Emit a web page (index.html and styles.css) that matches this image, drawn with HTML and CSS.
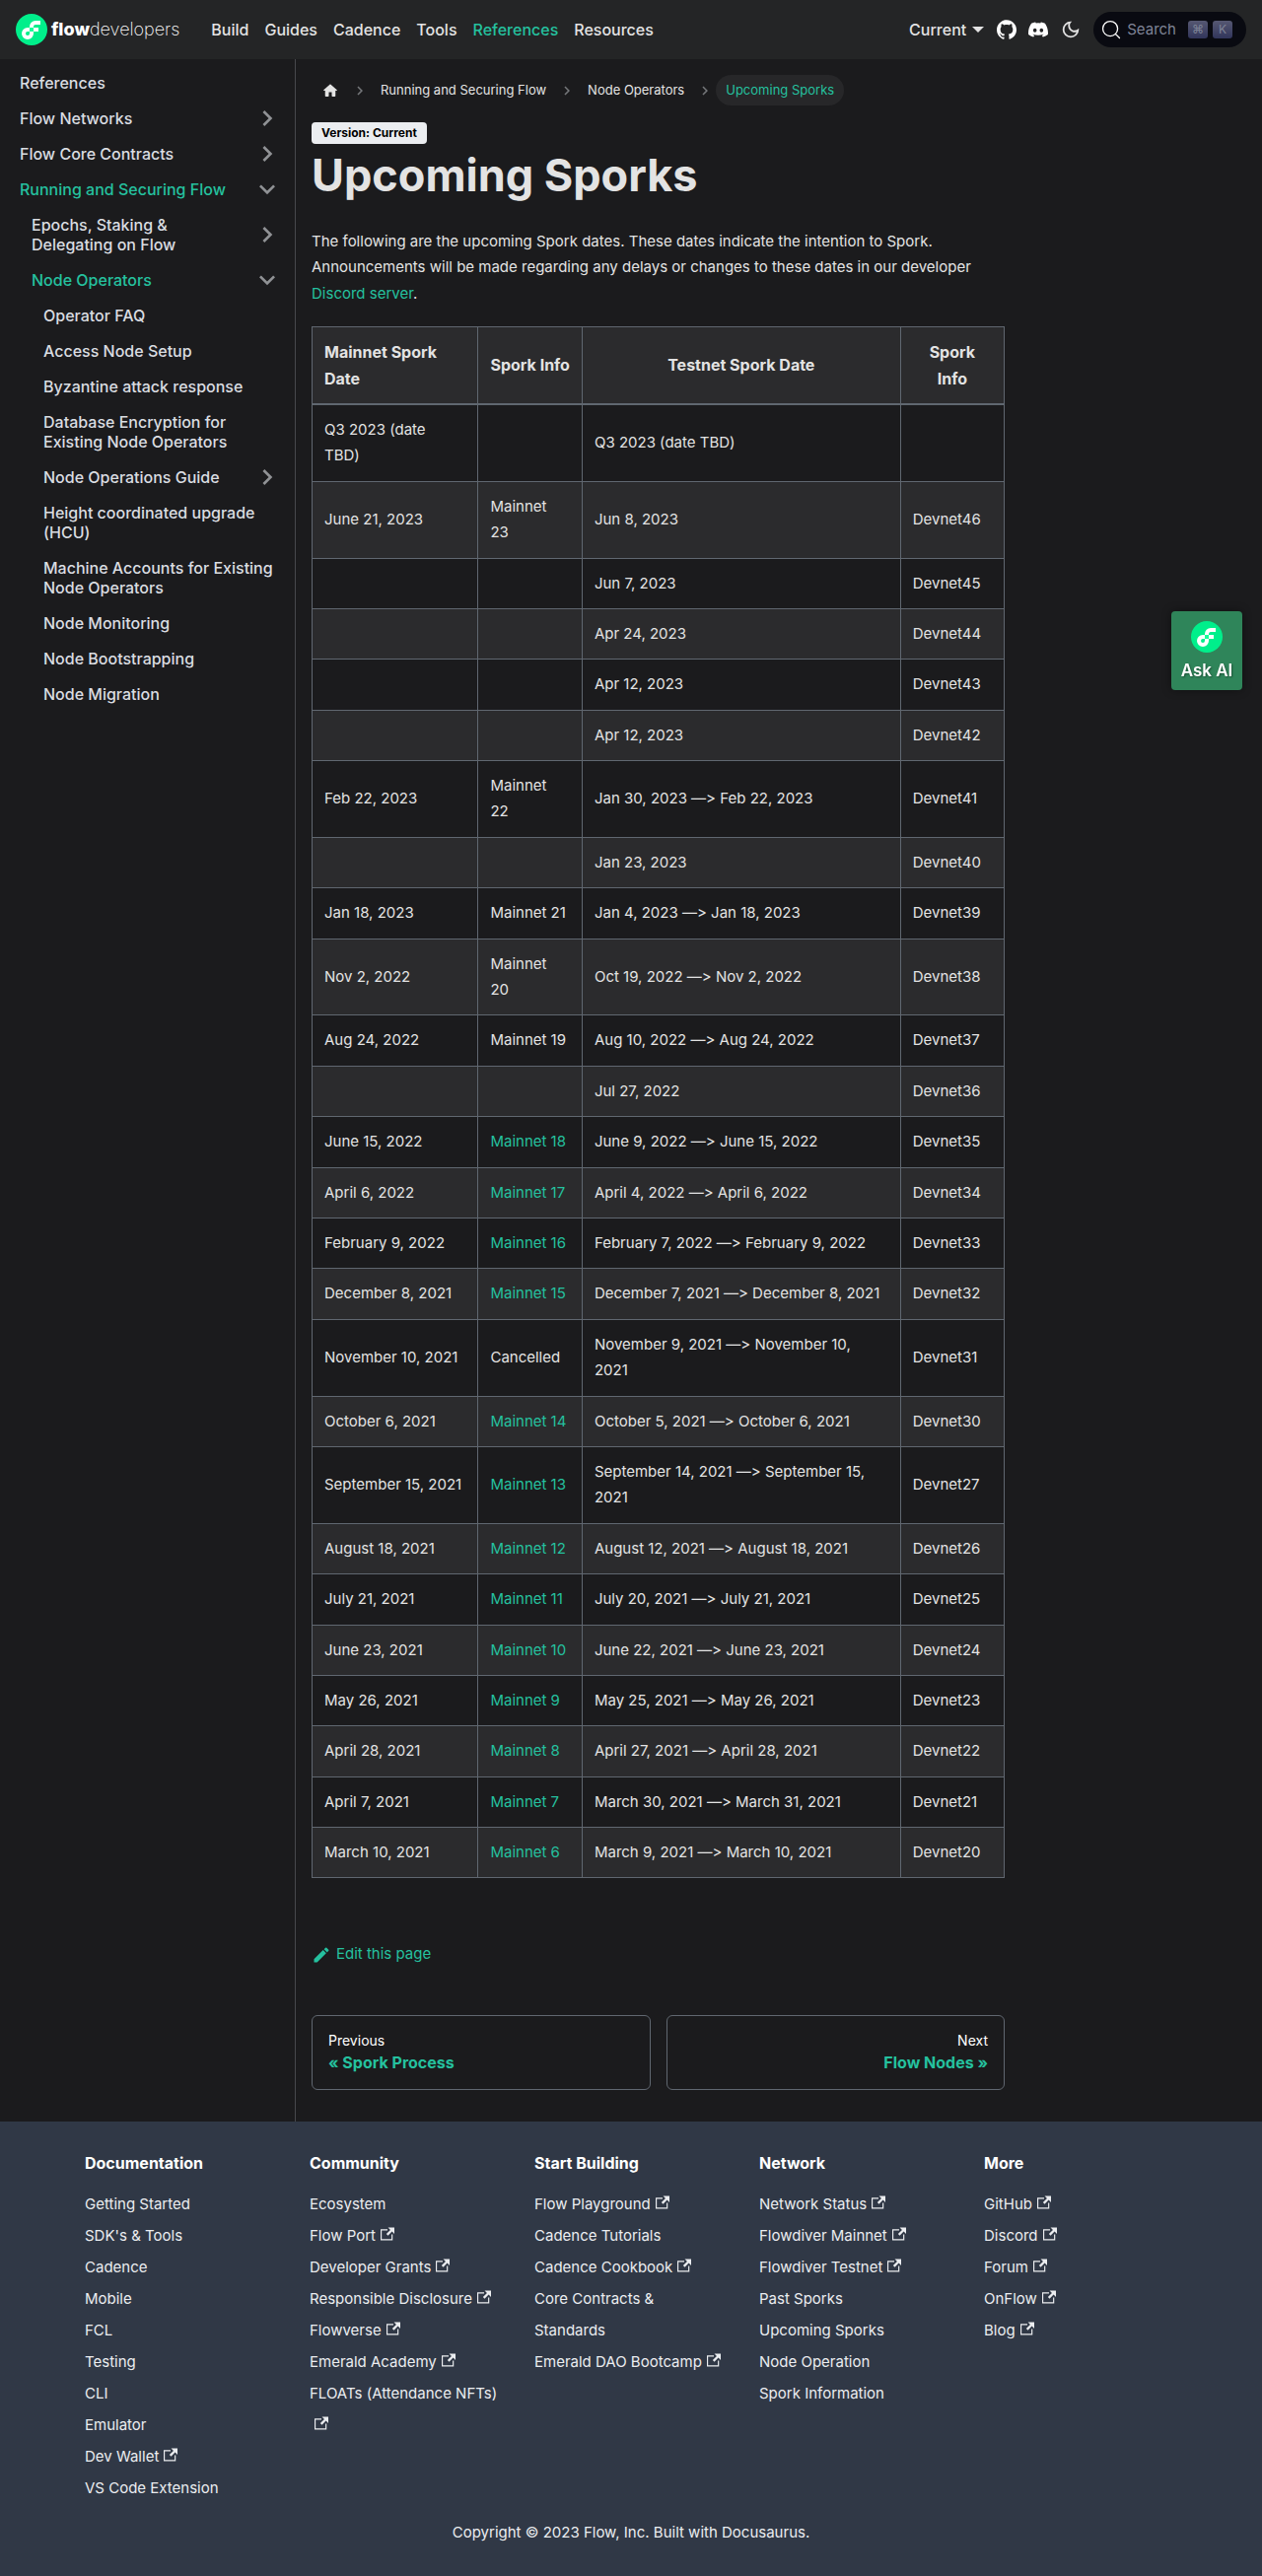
FILE: index.html
```html
<!DOCTYPE html>
<html lang="en">
<head>
<meta charset="utf-8">
<title>Upcoming Sporks | Flow Developers</title>
<link rel="stylesheet" href="styles.css">
</head>
<body>
<svg class="sprite" aria-hidden="true">
  <symbol id="flow-mark" viewBox="0 0 32 32">
    <circle cx="16" cy="16" r="16" fill="#00ef8b"/>
    <path fill="#fff" fill-rule="evenodd" d="M18 14h5v4h-5v2a6 6 0 1 1-6-6h2v-1a6 6 0 0 1 6-6h5v4h-5a2 2 0 0 0-2 2zM14 18h-2a2 2 0 1 0 2 2z"/>
    <path fill="#16ff99" d="M14 14h4v4h-4z"/>
  </symbol>
  <symbol id="external" viewBox="0 0 24 24">
    <path fill="currentColor" d="M21 13v10h-21v-19h12v2h-10v15h17v-8h2zm3-12h-10.988l4.035 4-6.977 7.07 2.828 2.828 6.977-7.07 4.125 4.172v-11z"/>
  </symbol>
  <symbol id="chevron" viewBox="0 0 24 24">
    <path fill="currentColor" d="M7.41 15.41 12 10.83l4.59 4.58L18 14l-6-6-6 6z"/>
  </symbol>
</svg>

<header class="navbar">
  <a class="brand" href="#"><svg class="brand-mark"><use href="#flow-mark"/></svg><span class="brand-name"><b>flow</b>developers</span></a>
  <nav class="nav-links" aria-label="Main">
    <a href="#">Build</a><a href="#">Guides</a><a href="#">Cadence</a><a href="#">Tools</a><a class="active" href="#">References</a><a href="#">Resources</a>
  </nav>
  <div class="nav-tools">
    <button class="version-menu" type="button">Current<span class="caret"></span></button>
    <a class="icon-link" href="#" aria-label="GitHub"><svg viewBox="0 0 24 24"><path fill="#fff" d="M12 .297c-6.63 0-12 5.373-12 12 0 5.303 3.438 9.8 8.205 11.385.6.113.82-.258.82-.577 0-.285-.01-1.04-.015-2.04-3.338.724-4.042-1.61-4.042-1.61C4.422 18.07 3.633 17.7 3.633 17.7c-1.087-.744.084-.729.084-.729 1.205.084 1.838 1.236 1.838 1.236 1.07 1.835 2.809 1.305 3.495.998.108-.776.417-1.305.76-1.605-2.665-.3-5.466-1.332-5.466-5.93 0-1.31.465-2.38 1.235-3.22-.135-.303-.54-1.523.105-3.176 0 0 1.005-.322 3.3 1.23.96-.267 1.98-.399 3-.405 1.02.006 2.04.138 3 .405 2.28-1.552 3.285-1.23 3.285-1.23.645 1.653.24 2.873.12 3.176.765.84 1.23 1.91 1.23 3.22 0 4.61-2.805 5.625-5.475 5.92.42.36.81 1.096.81 2.22 0 1.606-.015 2.896-.015 3.286 0 .315.21.69.825.57C20.565 22.092 24 17.592 24 12.297c0-6.627-5.373-12-12-12"/></svg></a>
    <a class="icon-link" href="#" aria-label="Discord"><svg viewBox="0 0 24 24"><path fill="#fff" d="M20.317 4.37a19.79 19.79 0 0 0-4.885-1.515.074.074 0 0 0-.079.037c-.21.375-.444.864-.608 1.25a18.27 18.27 0 0 0-5.487 0 12.64 12.64 0 0 0-.617-1.25.077.077 0 0 0-.079-.037A19.736 19.736 0 0 0 3.677 4.37a.07.07 0 0 0-.032.027C.533 9.046-.32 13.58.099 18.057a.082.082 0 0 0 .031.057 19.9 19.9 0 0 0 5.993 3.03.078.078 0 0 0 .084-.028 14.09 14.09 0 0 0 1.226-1.994.076.076 0 0 0-.041-.106 13.107 13.107 0 0 1-1.872-.892.077.077 0 0 1-.008-.128 10.2 10.2 0 0 0 .372-.292.074.074 0 0 1 .077-.01c3.928 1.793 8.18 1.793 12.062 0a.074.074 0 0 1 .078.01c.12.098.246.198.373.292a.077.077 0 0 1-.006.127 12.299 12.299 0 0 1-1.873.892.077.077 0 0 0-.041.107c.36.698.772 1.362 1.225 1.993a.076.076 0 0 0 .084.028 19.839 19.839 0 0 0 6.002-3.03.077.077 0 0 0 .032-.054c.5-5.177-.838-9.674-3.549-13.66a.061.061 0 0 0-.031-.03zM8.02 15.33c-1.183 0-2.157-1.085-2.157-2.419 0-1.333.956-2.419 2.157-2.419 1.21 0 2.176 1.096 2.157 2.42 0 1.333-.956 2.418-2.157 2.418zm7.975 0c-1.183 0-2.157-1.085-2.157-2.419 0-1.333.955-2.419 2.157-2.419 1.21 0 2.176 1.096 2.157 2.42 0 1.333-.946 2.418-2.157 2.418z"/></svg></a>
    <button class="theme-toggle" type="button" aria-label="Switch between dark and light mode"><svg viewBox="0 0 24 24"><path fill="currentColor" d="M9.37 5.51c-.18.64-.27 1.31-.27 1.99 0 4.08 3.32 7.4 7.4 7.4.68 0 1.35-.09 1.99-.27C17.45 17.19 14.93 19 12 19c-3.86 0-7-3.14-7-7 0-2.93 1.81-5.45 4.37-6.49zM12 3a9 9 0 1 0 9 9c0-.46-.04-.92-.1-1.36a5.389 5.389 0 0 1-4.4 2.26 5.403 5.403 0 0 1-3.14-9.8c-.44-.06-.9-.1-1.36-.1z"/></svg></button>
    <button class="search" type="button"><svg viewBox="0 0 20 20"><path d="M14.386 14.386l4.088 4.088-4.088-4.088a7.533 7.533 0 1 1 0-10.653 7.533 7.533 0 0 1 0 10.653z" stroke="currentColor" stroke-width="1.3" fill="none" stroke-linecap="round" stroke-linejoin="round"/></svg><span class="search-label">Search</span><kbd>⌘</kbd><kbd>K</kbd></button>
  </div>
</header>

<div class="layout">
  <nav class="sidebar" aria-label="Docs sidebar">
    <ul>
      <li><a href="#">References</a></li>
      <li><a href="#">Flow Networks<svg class="right"><use href="#chevron"/></svg></a></li>
      <li><a href="#">Flow Core Contracts<svg class="right"><use href="#chevron"/></svg></a></li>
      <li><a class="active" href="#">Running and Securing Flow<svg class="down"><use href="#chevron"/></svg></a>
        <ul>
          <li><a href="#">Epochs, Staking &amp; Delegating on Flow<svg class="right"><use href="#chevron"/></svg></a></li>
          <li><a class="active" href="#">Node Operators<svg class="down"><use href="#chevron"/></svg></a>
            <ul>
              <li><a href="#">Operator FAQ</a></li>
              <li><a href="#">Access Node Setup</a></li>
              <li><a href="#">Byzantine attack response</a></li>
              <li><a href="#">Database Encryption for Existing Node Operators</a></li>
              <li><a href="#">Node Operations Guide<svg class="right"><use href="#chevron"/></svg></a></li>
              <li><a href="#">Height coordinated upgrade (HCU)</a></li>
              <li><a href="#">Machine Accounts for Existing Node Operators</a></li>
              <li><a href="#">Node Monitoring</a></li>
              <li><a href="#">Node Bootstrapping</a></li>
              <li><a href="#">Node Migration</a></li>
            </ul>
          </li>
        </ul>
      </li>
    </ul>
  </nav>

  <main class="content">
    <div class="doc">
      <nav class="breadcrumbs" aria-label="Breadcrumbs">
        <a class="crumb home" href="#" aria-label="Home page"><svg viewBox="0 0 24 24"><path fill="currentColor" d="M10 19v-5h4v5c0 .55.45 1 1 1h3c.55 0 1-.45 1-1v-7h1.7c.46 0 .68-.57.33-.87L12.67 3.6c-.38-.34-.96-.34-1.34 0l-8.36 7.53c-.34.3-.13.87.33.87H5v7c0 .55.45 1 1 1h3c.55 0 1-.45 1-1z"/></svg></a>
        <svg class="sep"><use href="#chevron"/></svg>
        <a class="crumb" href="#">Running and Securing Flow</a>
        <svg class="sep"><use href="#chevron"/></svg>
        <a class="crumb" href="#">Node Operators</a>
        <svg class="sep"><use href="#chevron"/></svg>
        <span class="crumb current">Upcoming Sporks</span>
      </nav>
      <span class="badge">Version: Current</span>
      <h1>Upcoming Sporks</h1>
      <p>The following are the upcoming Spork dates. These dates indicate the intention to Spork. Announcements will be made regarding any delays or changes to these dates in our developer <a href="#">Discord server</a>.</p>
      <table>
        <colgroup><col class="col-date"><col class="col-info"><col class="col-range"><col class="col-info"></colgroup>
        <thead><tr><th class="start">Mainnet Spork Date</th><th class="start nowrap">Spork Info</th><th>Testnet Spork Date</th><th>Spork<br>Info</th></tr></thead>
        <tbody>
          <tr><td>Q3 2023 (date<br>TBD)</td><td></td><td>Q3 2023 (date TBD)</td><td></td></tr>
          <tr><td>June 21, 2023</td><td>Mainnet<br>23</td><td>Jun 8, 2023</td><td>Devnet46</td></tr>
          <tr><td></td><td></td><td>Jun 7, 2023</td><td>Devnet45</td></tr>
          <tr><td></td><td></td><td>Apr 24, 2023</td><td>Devnet44</td></tr>
          <tr><td></td><td></td><td>Apr 12, 2023</td><td>Devnet43</td></tr>
          <tr><td></td><td></td><td>Apr 12, 2023</td><td>Devnet42</td></tr>
          <tr><td>Feb 22, 2023</td><td>Mainnet<br>22</td><td>Jan 30, 2023 —&gt; Feb 22, 2023</td><td>Devnet41</td></tr>
          <tr><td></td><td></td><td>Jan 23, 2023</td><td>Devnet40</td></tr>
          <tr><td>Jan 18, 2023</td><td>Mainnet 21</td><td>Jan 4, 2023 —&gt; Jan 18, 2023</td><td>Devnet39</td></tr>
          <tr><td>Nov 2, 2022</td><td>Mainnet<br>20</td><td>Oct 19, 2022 —&gt; Nov 2, 2022</td><td>Devnet38</td></tr>
          <tr><td>Aug 24, 2022</td><td>Mainnet 19</td><td>Aug 10, 2022 —&gt; Aug 24, 2022</td><td>Devnet37</td></tr>
          <tr><td></td><td></td><td>Jul 27, 2022</td><td>Devnet36</td></tr>
          <tr><td>June 15, 2022</td><td><a href="#">Mainnet 18</a></td><td>June 9, 2022 —&gt; June 15, 2022</td><td>Devnet35</td></tr>
          <tr><td>April 6, 2022</td><td><a href="#">Mainnet 17</a></td><td>April 4, 2022 —&gt; April 6, 2022</td><td>Devnet34</td></tr>
          <tr><td>February 9, 2022</td><td><a href="#">Mainnet 16</a></td><td>February 7, 2022 —&gt; February 9, 2022</td><td>Devnet33</td></tr>
          <tr><td>December 8, 2021</td><td><a href="#">Mainnet 15</a></td><td>December 7, 2021 —&gt; December 8, 2021</td><td>Devnet32</td></tr>
          <tr><td>November 10, 2021</td><td>Cancelled</td><td>November 9, 2021 —&gt; November 10,<br>2021</td><td>Devnet31</td></tr>
          <tr><td>October 6, 2021</td><td><a href="#">Mainnet 14</a></td><td>October 5, 2021 —&gt; October 6, 2021</td><td>Devnet30</td></tr>
          <tr><td>September 15, 2021</td><td><a href="#">Mainnet 13</a></td><td>September 14, 2021 —&gt; September 15,<br>2021</td><td>Devnet27</td></tr>
          <tr><td>August 18, 2021</td><td><a href="#">Mainnet 12</a></td><td>August 12, 2021 —&gt; August 18, 2021</td><td>Devnet26</td></tr>
          <tr><td>July 21, 2021</td><td><a href="#">Mainnet 11</a></td><td>July 20, 2021 —&gt; July 21, 2021</td><td>Devnet25</td></tr>
          <tr><td>June 23, 2021</td><td><a href="#">Mainnet 10</a></td><td>June 22, 2021 —&gt; June 23, 2021</td><td>Devnet24</td></tr>
          <tr><td>May 26, 2021</td><td><a href="#">Mainnet 9</a></td><td>May 25, 2021 —&gt; May 26, 2021</td><td>Devnet23</td></tr>
          <tr><td>April 28, 2021</td><td><a href="#">Mainnet 8</a></td><td>April 27, 2021 —&gt; April 28, 2021</td><td>Devnet22</td></tr>
          <tr><td>April 7, 2021</td><td><a href="#">Mainnet 7</a></td><td>March 30, 2021 —&gt; March 31, 2021</td><td>Devnet21</td></tr>
          <tr><td>March 10, 2021</td><td><a href="#">Mainnet 6</a></td><td>March 9, 2021 —&gt; March 10, 2021</td><td>Devnet20</td></tr>
        </tbody>
      </table>
      <a class="edit" href="#"><svg viewBox="0 0 40 40"><path fill="currentColor" d="m34.5 11.7-3 3.1-6.3-6.3 3.1-3q.5-.5 1.2-.5t1.1.5l3.9 3.9q.5.4.5 1.1t-.5 1.2zM5 28.600l18.400-18.400 6.300 6.300-18.400 18.500h-6.300z"/></svg>Edit this page</a>
      <nav class="pager" aria-label="Docs pages">
        <a href="#"><span>Previous</span><strong>« Spork Process</strong></a>
        <a class="next" href="#"><span>Next</span><strong>Flow Nodes »</strong></a>
      </nav>
    </div>
  </main>
</div>

<button class="ask-ai" type="button"><svg><use href="#flow-mark"/></svg>Ask AI</button>

<footer class="footer">
  <div class="footer-cols">
    <section><h2>Documentation</h2><ul>
      <li><a href="#">Getting Started</a></li><li><a href="#">SDK's &amp; Tools</a></li><li><a href="#">Cadence</a></li><li><a href="#">Mobile</a></li><li><a href="#">FCL</a></li><li><a href="#">Testing</a></li><li><a href="#">CLI</a></li><li><a href="#">Emulator</a></li><li><a href="#">Dev Wallet<svg><use href="#external"/></svg></a></li><li><a href="#">VS Code Extension</a></li></ul></section>
    <section><h2>Community</h2><ul>
      <li><a href="#">Ecosystem</a></li><li><a href="#">Flow Port<svg><use href="#external"/></svg></a></li><li><a href="#">Developer Grants<svg><use href="#external"/></svg></a></li><li><a href="#">Responsible Disclosure<svg><use href="#external"/></svg></a></li><li><a href="#">Flowverse<svg><use href="#external"/></svg></a></li><li><a href="#">Emerald Academy<svg><use href="#external"/></svg></a></li><li><a href="#">FLOATs (Attendance NFTs)<svg><use href="#external"/></svg></a></li></ul></section>
    <section><h2>Start Building</h2><ul>
      <li><a href="#">Flow Playground<svg><use href="#external"/></svg></a></li><li><a href="#">Cadence Tutorials</a></li><li><a href="#">Cadence Cookbook<svg><use href="#external"/></svg></a></li><li><a href="#">Core Contracts &amp;<br>Standards</a></li><li><a href="#">Emerald DAO Bootcamp<svg><use href="#external"/></svg></a></li></ul></section>
    <section><h2>Network</h2><ul>
      <li><a href="#">Network Status<svg><use href="#external"/></svg></a></li><li><a href="#">Flowdiver Mainnet<svg><use href="#external"/></svg></a></li><li><a href="#">Flowdiver Testnet<svg><use href="#external"/></svg></a></li><li><a href="#">Past Sporks</a></li><li><a href="#">Upcoming Sporks</a></li><li><a href="#">Node Operation</a></li><li><a href="#">Spork Information</a></li></ul></section>
    <section><h2>More</h2><ul>
      <li><a href="#">GitHub<svg><use href="#external"/></svg></a></li><li><a href="#">Discord<svg><use href="#external"/></svg></a></li><li><a href="#">Forum<svg><use href="#external"/></svg></a></li><li><a href="#">OnFlow<svg><use href="#external"/></svg></a></li><li><a href="#">Blog<svg><use href="#external"/></svg></a></li></ul></section>
  </div>
  <p class="copyright">Copyright © 2023 Flow, Inc. Built with Docusaurus.</p>
</footer>
</body>
</html>
```
FILE: styles.css
```css
:root {
  --green: #25c19f;
  --text: #e3e3e3;
  --bg: #1b1b1d;
  --line: #606770;
}

* { box-sizing: border-box; }

body {
  margin: 0;
  background: var(--bg);
  color: var(--text);
  font-family: Inter, "Liberation Sans", sans-serif;
  font-size: 15px;
  line-height: 1.76;
  font-variant-ligatures: no-contextual;
}

a { color: var(--green); text-decoration: none; }
ul { margin: 0; padding: 0; list-style: none; }
button { font: inherit; color: inherit; border: 0; background: none; padding: 0; }
.sprite { display: none; }

/* Top bar */
.navbar {
  display: flex;
  align-items: center;
  height: 60px;
  padding: 0 16px;
  background: #242526;
}
.brand { display: flex; align-items: center; gap: 4px; margin-right: 32px; color: #fff; }
.brand-mark { width: 32px; height: 32px; }
.brand-name { font-size: 18px; font-weight: 200; }
.brand-name b { font-weight: 800; }
.nav-links { display: flex; gap: 16px; font-size: 16px; font-weight: 500; }
.nav-links a { color: var(--text); }
.nav-links .active { color: var(--green); }
.nav-tools { display: flex; align-items: center; margin-left: auto; }
.version-menu { display: flex; align-items: center; gap: 6px; margin-right: 13px; font-size: 16px; font-weight: 500; }
.caret { border: 6px solid transparent; border-top-color: currentColor; border-bottom: 0; }
.icon-link { display: flex; margin-right: 12px; }
.icon-link svg { width: 20px; height: 20px; }
.theme-toggle { display: flex; margin-right: 12px; }
.theme-toggle svg { width: 22px; height: 22px; }
.search {
  display: flex;
  align-items: center;
  height: 36px;
  padding: 0 14px 0 8px;
  border-radius: 18px;
  background: #090a11;
  color: #fff;
}
.search svg { width: 20px; height: 20px; }
.search-label { margin: 0 12px 0 6px; color: #7f8497; }
.search kbd {
  width: 20px;
  height: 18px;
  margin-right: 5px;
  border-radius: 3px;
  background: linear-gradient(#565872, #31355b);
  color: #7f8497;
  font: 12px/18px Inter, "DejaVu Sans", sans-serif;
}
.search kbd:last-child { margin-right: 0; }

/* Page columns */
.layout { display: flex; }
.sidebar { flex: none; width: 300px; padding: 8px; border-right: 1px solid #47484c; }
.sidebar li { margin-top: 4px; }
.sidebar > ul > li:first-child { margin-top: 0; }
.sidebar ul ul { padding-left: 12px; }
.sidebar a {
  display: flex;
  align-items: center;
  justify-content: space-between;
  padding: 6px 4px 6px 12px;
  color: #dadde1;
  font-size: 16px;
  font-weight: 500;
  line-height: 20px;
}
.sidebar a.active { color: var(--green); }
.sidebar svg { flex: none; width: 32px; height: 32px; margin: -6px 0; color: #909295; }
.right { transform: rotate(90deg); }
.down { transform: rotate(180deg); }

.content { flex: 1; padding: 16px 0 32px; }
.doc { width: 75%; padding: 0 16px; }

.breadcrumbs { display: flex; align-items: center; margin-bottom: 17px; }
.crumb { padding: 5px 10px; border-radius: 16px; color: var(--text); font-size: 13px; line-height: 21px; }
.crumb svg { display: block; width: 18px; height: 18px; }
.crumb.current { background: #272729; color: var(--green); }
.sep { width: 18px; height: 18px; margin: 0 2px; color: #75777a; transform: rotate(90deg); }

.badge {
  display: block;
  width: fit-content;
  padding: 0 10px;
  border-radius: 4px;
  background: #ebedf0;
  color: #000;
  font-size: 12px;
  font-weight: 700;
  line-height: 22px;
}
h1 { margin: 2px 0 24px; font-size: 45px; line-height: 60px; font-weight: 700; }
p { margin: 0 0 20px; }

table { width: 100%; border-collapse: collapse; }
.col-date { width: 24%; }
.col-info { width: 15%; }
.col-range { width: 46%; }
th, td { padding: 12px; border: 1px solid var(--line); text-align: left; }
th { font-size: 16px; line-height: 1.65; text-align: center; }
th.start { text-align: left; }
.nowrap { white-space: nowrap; }
thead tr { background: #2b2b2d; border-bottom: 2px solid var(--line); }
tbody tr:nth-child(even) { background: #2b2b2d; }

.edit { display: flex; align-items: center; gap: 5px; margin-top: 64px; }
.edit svg { width: 20px; height: 20px; }

.pager { display: grid; grid-template-columns: 1fr 1fr; gap: 16px; margin-top: 48px; }
.pager a { display: flex; flex-direction: column; padding: 15px 16px; border: 1px solid var(--line); border-radius: 6px; font-size: 16px; line-height: 24px; }
.pager span { color: #fff; font-size: 14px; line-height: 20px; }
.pager .next { text-align: right; }

.ask-ai {
  position: fixed;
  top: 620px;
  right: 20px;
  display: flex;
  flex-direction: column;
  align-items: center;
  width: 72px;
  height: 80px;
  padding-top: 10px;
  border-radius: 4px;
  background: #2f855a;
  color: #fff;
  font-weight: 600;
  font-size: 17px;
  line-height: 36px;
  box-shadow: 0 0 10px rgba(0, 0, 0, .4);
  text-shadow: 1px 1px 2px rgba(0, 0, 0, .4);
}
.ask-ai svg { flex: none; width: 32px; height: 32px; }

.footer { padding: 32px; background: #303846; color: #ebedf0; }
.footer-cols { display: grid; grid-template-columns: repeat(5, 1fr); max-width: 1140px; margin: 0 auto; }
.footer section { padding: 0 16px; }
.footer h2 { margin: 0 0 16px; font-size: 16px; line-height: 20px; font-weight: 700; color: #fff; }
.footer li { line-height: 32px; }
.footer a { color: #ebedf0; }
.footer li svg { width: 14px; height: 14px; margin-left: 5px; }
.copyright { margin: 16px 0 0; text-align: center; }
```
